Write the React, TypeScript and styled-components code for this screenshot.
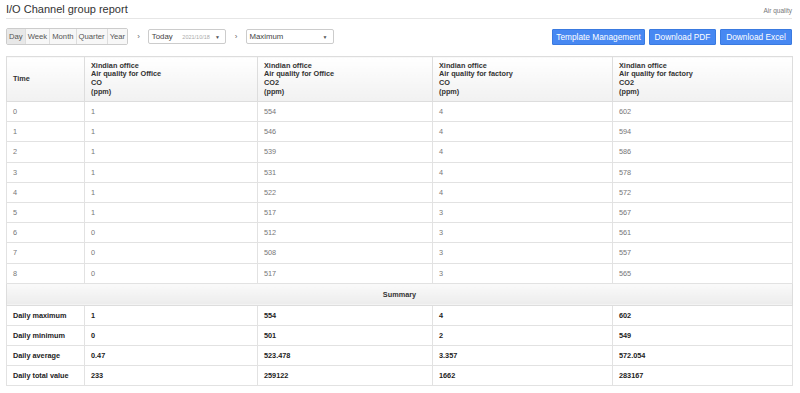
import React, { FC } from "react"
import styled, { createGlobalStyle } from "styled-components"

const GlobalStyle = createGlobalStyle`
  html, body {
    margin: 0;
    padding: 0;
    background: #fff;
    font-family: "Liberation Sans", Arial, sans-serif;
  }
`

const Page = styled.div`
  padding: 0 8px 0 6px;
`

const TitleBar = styled.div`
  display: flex;
  justify-content: space-between;
  align-items: flex-end;
  height: 18px;
  border-bottom: 1px solid #e6e6e6;
`

const Title = styled.h1`
  margin: 0;
  align-self: center;
  font-size: 11px;
  font-weight: normal;
  color: #333;
  line-height: 16px;
`

const Crumb = styled.span`
  font-size: 6.5px;
  color: #777;
  margin-bottom: 4px;
`

const Toolbar = styled.div`
  display: flex;
  align-items: center;
  margin-top: 9px;
  height: 17px;
`

const Segment = styled.div`
  display: flex;
  border: 1px solid #ccc;
  border-radius: 2px;
  height: 15px;
`

const SegButton = styled.button<{ $active?: boolean }>`
  font-family: "Liberation Sans", Arial, sans-serif;
  font-size: 7.7px;
  color: #555;
  padding: 0 2px;
  border: none;
  border-left: 1px solid #ddd;
  background: ${ p => p.$active ? "#e8e8e8" : "#f7f7f7" };
  &:first-child { border-left: none; }
`

const Arrow = styled.span`
  font-size: 8px;
  color: #666;
  margin: 0 8px 0 9px;
`

const Select = styled.div<{ $width: number }>`
  display: flex;
  align-items: center;
  width: ${ p => p.$width }px;
  height: 15px;
  box-sizing: border-box;
  border: 1px solid #ccc;
  border-radius: 2px;
  background: #fff;
  padding: 0 5px 0 3px;
  font-size: 7.8px;
  color: #444;
`

const SelectLabel = styled.span`
  flex: 1;
`

const SelectHint = styled.span`
  font-size: 5.5px;
  color: #aaa;
  margin-right: 5px;
`

const Caret = styled.span`
  font-size: 5px;
  color: #555;
`

const Actions = styled.div`
  margin-left: auto;
  display: flex;
  gap: 4px;
`

const BlueButton = styled.button<{ $width: number }>`
  width: ${ p => p.$width }px;
  height: 16px;
  padding: 0;
  border: 1px solid #3a7ae0;
  border-radius: 1px;
  background: #4788f2;
  color: #fff;
  font-family: "Liberation Sans", Arial, sans-serif;
  font-size: 8.3px;
`

const Table = styled.table`
  margin-top: 11px;
  width: 786px;
  border-collapse: collapse;
  table-layout: fixed;
  font-family: "Liberation Sans", Arial, sans-serif;
  font-size: 7.3px;
  border: 1px solid #ddd;
`

const Th = styled.th`
  height: 44px;
  padding: 0 6px;
  text-align: left;
  vertical-align: middle;
  font-weight: bold;
  color: #333;
  line-height: 8.6px;
  border: 1px solid #ddd;
  background: linear-gradient(#fff, #f1f1f1);
`

const Td = styled.td<{ $bold?: boolean }>`
  height: 19.2px;
  padding: 0 6px;
  border: 1px solid #e2e2e2;
  color: ${ p => p.$bold ? "#222" : "#777" };
  font-weight: ${ p => p.$bold ? "bold" : "normal" };
`

const SummaryCell = styled.td`
  height: 19px;
  text-align: center;
  font-weight: bold;
  color: #333;
  border: 1px solid #ddd;
  background: linear-gradient(#fafafa, #ececec);
`

const columns = [
  ["Xindian office", "Air quality for Office", "CO", "(ppm)"],
  ["Xindian office", "Air quality for Office", "CO2", "(ppm)"],
  ["Xindian office", "Air quality for factory", "CO", "(ppm)"],
  ["Xindian office", "Air quality for factory", "CO2", "(ppm)"],
]

const rows = [
  [1, 554, 4, 602],
  [1, 546, 4, 594],
  [1, 539, 4, 586],
  [1, 531, 4, 578],
  [1, 522, 4, 572],
  [1, 517, 3, 567],
  [0, 512, 3, 561],
  [0, 508, 3, 557],
  [0, 517, 3, 565],
]

const summary: [string, string[]][] = [
  ["Daily maximum", ["1", "554", "4", "602"]],
  ["Daily minimum", ["0", "501", "2", "549"]],
  ["Daily average", ["0.47", "523.478", "3.357", "572.054"]],
  ["Daily total value", ["233", "259122", "1662", "283167"]],
]

const widths = [78, 173, 175, 180, 180]

const App: FC = () => (
  <Page>
    <GlobalStyle />
    <TitleBar>
      <Title>I/O Channel group report</Title>
      <Crumb>Air quality</Crumb>
    </TitleBar>
    <Toolbar>
      <Segment>
        <SegButton $active>Day</SegButton>
        <SegButton>Week</SegButton>
        <SegButton>Month</SegButton>
        <SegButton>Quarter</SegButton>
        <SegButton>Year</SegButton>
      </Segment>
      <Arrow>›</Arrow>
      <Select $width={ 78 }>
        <SelectLabel>Today</SelectLabel>
        <SelectHint>2021/10/18</SelectHint>
        <Caret>▼</Caret>
      </Select>
      <Arrow>›</Arrow>
      <Select $width={ 88 }>
        <SelectLabel>Maximum</SelectLabel>
        <Caret>▼</Caret>
      </Select>
      <Actions>
        <BlueButton $width={ 93 }>Template Management</BlueButton>
        <BlueButton $width={ 67 }>Download PDF</BlueButton>
        <BlueButton $width={ 72 }>Download Excel</BlueButton>
      </Actions>
    </Toolbar>
    <Table>
      <colgroup>
        { widths.map((w, i) => <col key={ i } style={ { width: w } } />) }
      </colgroup>
      <thead>
        <tr>
          <Th>Time</Th>
          { columns.map((lines, i) => (
            <Th key={ i }>
              { lines.map(l => <div key={ l }>{ l }</div>) }
            </Th>
          )) }
        </tr>
      </thead>
      <tbody>
        { rows.map((r, i) => (
          <tr key={ i }>
            <Td>{ i }</Td>
            { r.map((v, j) => <Td key={ j }>{ v }</Td>) }
          </tr>
        )) }
        <tr>
          <SummaryCell colSpan={ 5 }>Summary</SummaryCell>
        </tr>
        { summary.map(([label, values]) => (
          <tr key={ label }>
            <Td $bold>{ label }</Td>
            { values.map((v, j) => <Td $bold key={ j }>{ v }</Td>) }
          </tr>
        )) }
      </tbody>
    </Table>
  </Page>
)

export default App
